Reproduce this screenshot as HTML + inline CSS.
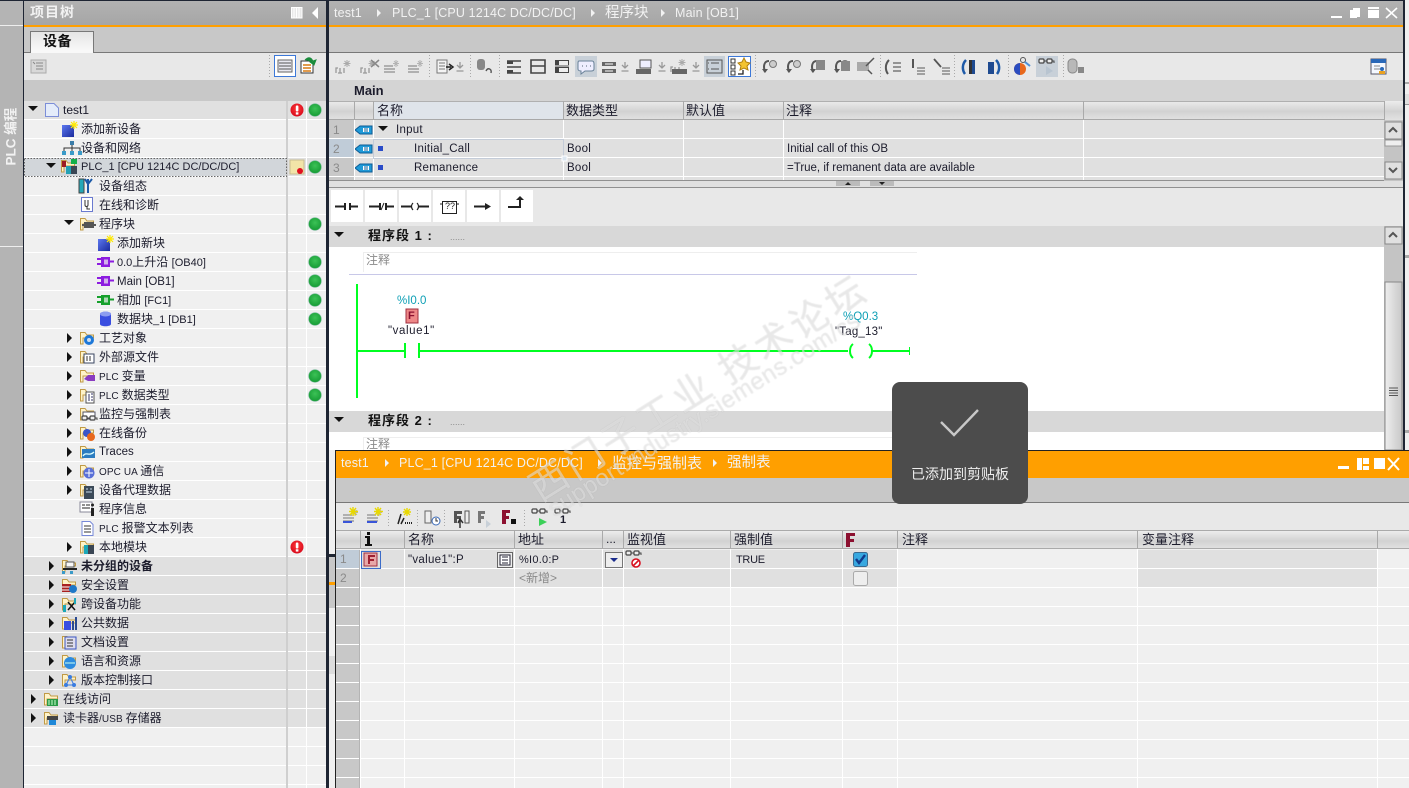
<!DOCTYPE html>
<html lang="zh"><head><meta charset="utf-8"><title>TIA</title>
<style>
html,body{margin:0;padding:0;width:1409px;height:788px;overflow:hidden;background:#f0f0f0}
body{position:relative;font:12px/19px "Liberation Sans","WenQuanYi Zen Hei","Noto Sans CJK SC",sans-serif;color:#1c1c2c}
#g{position:absolute;left:0;top:0}
.t{position:absolute;white-space:nowrap;height:19px;letter-spacing:0}
.w{color:#f2f2f2;font-size:12.5px;letter-spacing:.15px}
.h{color:#f2f2f2;font-size:14.5px;letter-spacing:0}
.th{font-size:13px}
.s{font-size:11px}
.p{font-size:10px;letter-spacing:.1px}
.b{font-weight:bold}
.c{color:#0d9fb5}
.y{color:#8a8a8a}
#wm{position:absolute;left:0;top:0;width:1409px;height:788px;pointer-events:none;overflow:hidden}
#wm div{position:absolute;white-space:nowrap;transform-origin:0 100%;transform:rotate(-32deg);color:rgba(255,255,255,.42);text-shadow:0 0 1px rgba(140,140,140,.35)}
#toast{position:absolute;left:892px;top:382px;width:136px;height:122px;background:#4c4c4c;border-radius:8px}
#toast div{position:absolute;left:0;right:0;top:83px;text-align:center;color:#eee;font-size:14px;line-height:19px}
#toast svg{position:absolute;left:0;top:0}
</style></head><body>
<svg id="g" width="1409" height="788" xmlns="http://www.w3.org/2000/svg">
<defs>
<linearGradient id="hd" x1="0" y1="0" x2="0" y2="1"><stop offset="0" stop-color="#b2b2b2"/><stop offset="1" stop-color="#a6a6a6"/></linearGradient>
<linearGradient id="th" x1="0" y1="0" x2="0" y2="1"><stop offset="0" stop-color="#ececec"/><stop offset=".55" stop-color="#d2d2d2"/><stop offset="1" stop-color="#e2e2e2"/></linearGradient>
<linearGradient id="tab" x1="0" y1="0" x2="0" y2="1"><stop offset="0" stop-color="#e4e4e4"/><stop offset="1" stop-color="#fafafa"/></linearGradient>
<linearGradient id="sb" x1="0" y1="0" x2="1" y2="0"><stop offset="0" stop-color="#eee"/><stop offset="1" stop-color="#c8c8c8"/></linearGradient>
<linearGradient id="bl" x1="0" y1="0" x2="1" y2="1"><stop offset="0" stop-color="#5c78f0"/><stop offset="1" stop-color="#1a2a9c"/></linearGradient>
<radialGradient id="gd" cx=".5" cy=".4" r=".6"><stop offset="0" stop-color="#3cc256"/><stop offset="1" stop-color="#159a34"/></radialGradient>
<radialGradient id="rd" cx=".5" cy=".4" r=".6"><stop offset="0" stop-color="#ff3a3a"/><stop offset="1" stop-color="#d80a1c"/></radialGradient>
<pattern id="rl" x="0" y="101" width="10" height="19" patternUnits="userSpaceOnUse"><rect y="18" width="10" height="1" fill="#fff"/></pattern>
<pattern id="rb" x="0" y="550" width="10" height="19" patternUnits="userSpaceOnUse"><rect y="18" width="10" height="1" fill="#fff"/></pattern>
<symbol id="dot" viewBox="0 0 14 14" width="14" height="14"><circle cx="7" cy="7" r="6.5" fill="url(#gd)" stroke="#bcd" stroke-opacity=".4"/></symbol>
<symbol id="err" viewBox="0 0 14 14" width="14" height="14"><circle cx="7" cy="7" r="6.5" fill="url(#rd)"/><rect x="5.8" y="2.5" width="2.6" height="6" rx="1" fill="#fff"/><rect x="5.8" y="9.3" width="2.6" height="2.3" fill="#fff"/></symbol>
<symbol id="fd" viewBox="0 0 18 18" width="18" height="18"><path d="M1.5 14V2.5H6L8 5H14.5V8H4V14Z" fill="#fff3c8" stroke="#c09a45"/></symbol>
<symbol id="rt" viewBox="0 0 6 10" width="6" height="10"><path d="M0 0L5 5L0 10Z" fill="#111"/></symbol>
<symbol id="dn" viewBox="0 0 10 6" width="10" height="6"><path d="M0 0H10L5 5Z" fill="#111"/></symbol>
<symbol id="new" viewBox="0 0 18 18" width="18" height="18"><rect x="1" y="4" width="12" height="12" fill="url(#bl)"/><path d="M13 0V8M9 4H17M10 1L16 7M16 1L10 7" stroke="#ffe900" stroke-width="1.2"/></symbol>
<symbol id="ob" viewBox="0 0 18 12" width="18" height="12"><path d="M0 3H4M0 8H4M13 5.5H17" stroke="currentColor" stroke-width="2"/><rect x="4" y="1" width="9" height="10" fill="currentColor"/><rect x="7" y="3.5" width="4" height="5" fill="#f0f0f0" fill-opacity=".7"/></symbol>
<symbol id="gl" viewBox="0 0 18 12" width="18" height="12"><rect x="1" y="2" width="5" height="4" rx="1" fill="#eee" stroke="#444" stroke-width="1.2"/><rect x="9" y="2" width="5" height="4" rx="1" fill="#eee" stroke="#444" stroke-width="1.2"/><path d="M6 4H9M14 4H16V6" fill="none" stroke="#444"/></symbol>
<symbol id="nw" viewBox="0 0 18 16" width="18" height="16"><path d="M1 14V9H3M5 14V9M3 14H7M9 14V9" fill="none" stroke="#999" stroke-width="1.3"/><path d="M12 1V8M8.5 4.500H15.500M9.500 2L14.500 7M14.500 2L9.500 7" stroke="#aaa"/></symbol>
<symbol id="stk" viewBox="0 0 18 16" width="18" height="16"><path d="M1 7H10M1 10H12M1 13H12" stroke="#b0b0b0" stroke-width="2"/><path d="M13 1V8M10 4.500H16M11 2L15 7M15 2L11 7" stroke="#b4b4b4"/></symbol>
<symbol id="ar" viewBox="0 0 8 12" width="8" height="12"><path d="M4 1V6M1 4L4 7L7 4M0.500 10H7.500" fill="none" stroke="#999" stroke-width="1.300"/></symbol>
<symbol id="ud" viewBox="0 0 14 14" width="14" height="14"><path d="M3 9L7 5L11 9" fill="none" stroke="#555" stroke-width="2"/></symbol>
<symbol id="dd" viewBox="0 0 14 14" width="14" height="14"><path d="M3 5L7 9L11 5" fill="none" stroke="#555" stroke-width="2"/></symbol>
<symbol id="tag" viewBox="0 0 18 10" width="18" height="10"><path d="M0 5L5 1H17V9H5Z" fill="#1f9ad8" stroke="#0c5c96"/><rect x="8" y="3" width="6" height="4" fill="#fff"/><path d="M10 3V7M12 3V7" stroke="#0c5c96"/></symbol>
<symbol id="call" viewBox="0 0 18 16" width="18" height="16"><path d="M9 2C4 2 3 7 5 13" fill="none" stroke="#555" stroke-width="2"/><path d="M2 10L5 14L8 10Z" fill="#555"/><circle cx="13" cy="5" r="3.500" fill="#ccc" stroke="#777"/></symbol>
</defs>

<!-- base strips -->
<rect width="1409" height="788" fill="#f0f0f0"/>
<rect x="0" y="0" width="23" height="788" fill="#b4b4b4"/>
<rect x="0" y="25" width="23" height="1" fill="#eee"/><rect x="0" y="246" width="23" height="1" fill="#eee"/>
<rect x="23" y="0" width="1" height="788" fill="#1e2533"/>
<rect x="0" y="0" width="1409" height="1" fill="#1e2533"/>
<rect x="326" y="0" width="3" height="788" fill="#1e2533"/>
<rect x="1403" y="0" width="2" height="450" fill="#1e2533"/>
<rect x="1405" y="0" width="4" height="450" fill="#f0f0f0"/>
<rect x="1405" y="82" width="4" height="2" fill="#aaa"/><rect x="1405" y="94" width="4" height="10" fill="#e0e0e0"/><rect x="1405" y="104" width="4" height="1" fill="#999"/>
<rect x="1405" y="255" width="4" height="3" fill="#aaa"/><rect x="1405" y="430" width="4" height="3" fill="#aaa"/>

<!-- project tree -->
<rect x="24" y="1" width="302" height="24" fill="url(#hd)"/>
<rect x="24" y="25" width="302" height="2" fill="#ff9f00"/>
<rect x="24" y="27" width="302" height="26" fill="#c8c8c8"/>
<rect x="24" y="52" width="302" height="1" fill="#787878"/>
<path d="M30.5 52.5V31.5H93.5V52.5" fill="url(#tab)" stroke="#787878"/>
<rect x="31" y="51" width="62" height="2" fill="#f8f8f8"/>
<rect x="24" y="53" width="302" height="27" fill="#e8e8e8"/>
<rect x="24" y="80" width="302" height="21" fill="#c8c8c8"/>
<rect x="24" y="101" width="302" height="687" fill="#f0f0f0"/>
<rect x="24" y="101" width="302" height="19" fill="#e0e0e0"/>
<rect x="24" y="557" width="302" height="171" fill="#e0e0e0"/>
<rect x="24" y="158" width="262" height="19" fill="#d2d6da"/>
<rect x="287" y="158" width="39" height="19" fill="#e0e0e0"/>
<rect x="24" y="101" width="302" height="687" fill="url(#rl)"/>
<rect x="286" y="101" width="2" height="687" fill="#cfcfcf"/>
<rect x="306" y="101" width="1" height="687" fill="#fff"/>
<rect x="24.5" y="158.5" width="262" height="18" fill="none" stroke="#666" stroke-dasharray="1.5 1.5"/>
<!-- tree toolbar icons -->
<rect x="31" y="60" width="15" height="13" fill="#d8d8d8" stroke="#aaa"/><path d="M36 63h7M36 66h7M36 69h7M33 62l2 2" stroke="#888"/>
<path d="M269.5 55V79" stroke="#aaa" stroke-dasharray="1 2"/>
<rect x="274.5" y="55.5" width="21" height="21" fill="#fff" stroke="#3c78d8"/>
<rect x="278" y="60" width="14" height="12" fill="#e8e8f0" stroke="#666"/><path d="M279 63H291M279 66H291M279 69H291" stroke="#555"/>
<rect x="301" y="61" width="12" height="12" fill="#fff" stroke="#333"/><path d="M303 65H311M303 68H311M303 71H311" stroke="#d87a10" stroke-width="1.4"/><path d="M305 60C309 56 312 58 313 62M310 62L314 65L316 60Z" fill="#1a8c3c" stroke="#1a8c3c"/>
<!-- arrows & tree icons -->
<use href="#dn" x="28" y="106"/><use href="#dn" x="46" y="163"/><use href="#dn" x="64" y="220"/>
<use href="#rt" x="67" y="333"/><use href="#rt" x="67" y="352"/><use href="#rt" x="67" y="371"/><use href="#rt" x="67" y="390"/><use href="#rt" x="67" y="409"/><use href="#rt" x="67" y="428"/><use href="#rt" x="67" y="447"/><use href="#rt" x="67" y="466"/><use href="#rt" x="67" y="485"/><use href="#rt" x="67" y="542"/>
<use href="#rt" x="49" y="561"/><use href="#rt" x="49" y="580"/><use href="#rt" x="49" y="599"/><use href="#rt" x="49" y="618"/><use href="#rt" x="49" y="637"/><use href="#rt" x="49" y="656"/><use href="#rt" x="49" y="675"/>
<use href="#rt" x="31" y="694"/><use href="#rt" x="31" y="713"/>
<!-- test1 doc -->
<path d="M45.5 103.5H54L58.500 108V116.500H45.500Z" fill="#e4ecfa" stroke="#7c8ed8"/>
<use href="#new" x="61" y="121"/>
<rect x="70" y="141" width="4" height="4" fill="#3a7ca8"/><path d="M72 145V148M64 151V148H80V151M72 148V151" fill="none" stroke="#333"/><rect x="62" y="151" width="4" height="4" fill="#3a9ac8"/><rect x="70" y="151" width="4" height="4" fill="#3a9ac8"/><rect x="78" y="151" width="4" height="4" fill="#3a9ac8"/>
<use href="#fd" x="60" y="158"/><rect x="71" y="159" width="6" height="5" fill="#12b04a"/><rect x="66" y="166" width="5" height="8" fill="#24a0b4"/><rect x="71" y="166" width="6" height="8" fill="#3a4654"/><rect x="62" y="161" width="4" height="6" fill="#9c1c24"/>
<rect x="79" y="179" width="5" height="14" fill="#24a8b8" stroke="#444"/><path d="M88 179V193M85 179L88 184L92 179" fill="none" stroke="#1c5aa8" stroke-width="2"/>
<rect x="81.500" y="197.500" width="11" height="14" fill="#fff" stroke="#6a7ad0"/><path d="M85 200V205C85 207 88 207 88 205V200M87 206V209H90" fill="none" stroke="#333"/>
<use href="#fd" x="79" y="216"/><rect x="84" y="222" width="10" height="6" fill="#555"/><path d="M82 225H96" stroke="#555" stroke-width="2"/>
<use href="#new" x="97" y="235"/>
<g color="#8c1ce0"><use href="#ob" x="97" y="256"/><use href="#ob" x="97" y="275"/></g>
<g color="#16a02c"><use href="#ob" x="97" y="294"/></g>
<path d="M100 314C100 311 111 311 111 314V324C111 327 100 327 100 324Z" fill="#3a4ee0"/><ellipse cx="105.500" cy="314" rx="5.500" ry="2.500" fill="#8c9cf0"/>
<!-- folders level 2 -->
<use href="#fd" x="79" y="330"/><circle cx="89" cy="340" r="5" fill="#1e78d8"/><circle cx="89" cy="340" r="2" fill="#cde"/>
<use href="#fd" x="79" y="349"/><rect x="84" y="354" width="10" height="9" fill="#fff" stroke="#3a4660"/><path d="M87 356V361M90 356V361" stroke="#333"/>
<use href="#fd" x="79" y="368"/><path d="M84 379L88 375H95V381H88Z" fill="#8a3cc0"/>
<use href="#fd" x="79" y="387"/><rect x="86" y="392" width="8" height="11" fill="#fff" stroke="#555"/><path d="M89 394V401M91 394H93M91 397H93M91 400H93" stroke="#336"/>
<use href="#fd" x="79" y="406"/><rect x="83" y="412" width="12" height="7" fill="#fff" stroke="#556"/><use href="#gl" x="81" y="414"/>
<use href="#fd" x="79" y="425"/><circle cx="87" cy="433" r="4" fill="#3a55c8"/><circle cx="91" cy="437" r="4" fill="#e8681c"/>
<use href="#fd" x="79" y="444"/><rect x="82" y="449" width="13" height="9" fill="#2c7cc0"/><path d="M83 456C86 451 89 457 94 452" fill="none" stroke="#dff" stroke-width="1.300"/>
<use href="#fd" x="79" y="463"/><circle cx="89" cy="473" r="5.500" fill="#5a70d8"/><path d="M85 473H93M89 469V477" stroke="#fff"/>
<use href="#fd" x="79" y="482"/><rect x="84" y="486" width="10" height="13" fill="#3c4a58"/><path d="M86 489H88M90 489H92M86 492H92" stroke="#cde"/>
<rect x="80" y="502" width="12" height="10" fill="#fff" stroke="#889"/><path d="M82 505H85M86 505H90M82 508H90" stroke="#222"/><rect x="91" y="508" width="3" height="8" fill="#222"/><circle cx="92.500" cy="505" r="1.500" fill="#222"/>
<path d="M82 521.500H90L93 524.500V535.500H82Z" fill="#fff" stroke="#7688d8"/><path d="M84 526H91M84 529H91M84 532H91" stroke="#333"/>
<use href="#fd" x="79" y="539"/><rect x="84" y="545" width="4" height="9" fill="#1ca8b8"/><rect x="88" y="545" width="6" height="9" fill="#3a4654"/>
<!-- folders level 1 -->
<use href="#fd" x="61" y="558"/><rect x="66" y="562" width="8" height="5" fill="#f8f8f8" stroke="#555"/><path d="M63 569H77" stroke="#222" stroke-width="2"/><rect x="62" y="571" width="3" height="3" fill="#3a9ac8"/><rect x="70" y="571" width="3" height="3" fill="#3a9ac8"/>
<use href="#fd" x="61" y="577"/><rect x="62" y="584" width="9" height="8" fill="#a82020"/><path d="M62 587H71M62 590H71" stroke="#fff"/><circle cx="73" cy="589" r="4" fill="#1e78c8"/>
<use href="#fd" x="61" y="596"/><path d="M68 602L75 610M75 602L68 610" stroke="#111" stroke-width="1.500"/><rect x="63" y="605" width="3" height="7" fill="#1ca8b8"/><rect x="74" y="598" width="2" height="6" fill="#1ca8b8"/>
<use href="#fd" x="61" y="615"/><rect x="64" y="621" width="7" height="9" fill="#3a4ee0"/><path d="M73 621V630M76 617V630" stroke="#2a4a90" stroke-width="2"/>
<use href="#fd" x="61" y="634"/><rect x="65" y="637" width="11" height="12" fill="#dde" stroke="#3a55c0"/><path d="M67 640H73M67 643H73M67 646H73" stroke="#333"/>
<use href="#fd" x="61" y="653"/><circle cx="70" cy="663" r="6" fill="#2c8ce0"/><path d="M65 663H75" stroke="#cfe" />
<use href="#fd" x="61" y="672"/><circle cx="70" cy="677" r="2" fill="#3a7ce0"/><circle cx="66" cy="685" r="2" fill="#3a7ce0"/><circle cx="74" cy="685" r="2" fill="#3a7ce0"/><path d="M70 677L66 685H74Z" fill="none" stroke="#3a7ce0"/>
<use href="#fd" x="43" y="691"/><rect x="47" y="699" width="11" height="7" fill="#2a9a48"/><path d="M49 700V705M52 700V705M55 700V705" stroke="#cfc"/>
<use href="#fd" x="43" y="710"/><rect x="47" y="716" width="11" height="4" fill="#444"/><rect x="49" y="720" width="7" height="5" fill="#1e88d8"/>
<!-- status -->
<use href="#err" x="290" y="103"/><use href="#dot" x="308" y="103"/>
<rect x="290" y="160" width="14" height="14" fill="#f2e4a8" stroke="#c8bc90"/><circle cx="300" cy="171" r="3" fill="#e01020"/>
<use href="#dot" x="308" y="160"/><use href="#dot" x="308" y="217"/><use href="#dot" x="308" y="255"/><use href="#dot" x="308" y="274"/><use href="#dot" x="308" y="293"/><use href="#dot" x="308" y="312"/><use href="#dot" x="308" y="369"/><use href="#dot" x="308" y="388"/><use href="#err" x="290" y="540"/>

<!-- main editor -->
<rect x="329" y="1" width="1074" height="24" fill="url(#hd)"/>
<rect x="329" y="25" width="1074" height="2" fill="#ff9f00"/>
<rect x="329" y="27" width="1074" height="26" fill="#c8c8c8"/>
<rect x="329" y="52" width="1074" height="1" fill="#787878"/>
<rect x="329" y="53" width="1074" height="27" fill="#e8e8e8"/>
<rect x="329" y="80" width="1074" height="21" fill="#d4d4d4"/>
<!-- header arrows -->
<path d="M377 9L381 13L377 17Z M591 9L595 13L591 17Z M661 9L665 13L661 17Z" fill="#f2f2f2"/>
<!-- win buttons -->
<rect x="1331" y="16" width="11" height="2" fill="#fff"/>
<rect x="1353" y="8" width="7" height="9" fill="#fff"/><rect x="1350" y="10" width="7" height="8" fill="#fff"/>
<rect x="1368" y="7" width="11" height="2" fill="#fff"/><rect x="1368" y="10" width="11" height="8" fill="#fff"/>
<path d="M1386 8L1397 18M1397 8L1386 18" stroke="#fff" stroke-width="1.600"/>
<!-- toolbar highlight -->
<rect x="575" y="56" width="22" height="21" fill="#c8d0d8"/>
<rect x="704" y="56" width="21" height="21" fill="#c8d0d8"/>
<rect x="728.500" y="56.500" width="22" height="20" fill="#fff" stroke="#3c78d8"/>
<rect x="1036" y="56" width="22" height="21" fill="#c8d0d8"/>
<g stroke="#aaa" stroke-dasharray="1 2"><path d="M429.500 55V78M470.500 55V78M499.500 55V78M755.500 55V78M880.500 55V78M954.500 55V78M1008.500 55V78M1063.500 55V78"/></g>
<use href="#nw" x="335" y="59"/><use href="#nw" x="360" y="59"/><path d="M371 60L379 67M379 60L371 67" stroke="#888" stroke-width="1.500"/>
<use href="#stk" x="383" y="59"/><use href="#stk" x="407" y="59"/>
<path d="M437 60H447V73H437ZM439 63H445M439 66H445M439 69H445" fill="#f4f4f4" stroke="#777"/><path d="M446 67H451M449 64L453 67L449 70" fill="none" stroke="#222" stroke-width="1.500"/><use href="#ar" x="456" y="61"/>
<rect x="477" y="59" width="8" height="11" rx="3" fill="#888"/><path d="M486 71C488 67 492 69 491 73" fill="none" stroke="#555" stroke-width="1.400"/>
<g fill="none" stroke="#444" stroke-width="1.600"><path d="M507 61H521M507 67H521M507 73H521"/><path d="M531 60H545V73H531ZM531 66H545"/></g><path d="M507 61h6v3h-6zM507 70h6v3h-6z" fill="#444"/>
<rect x="555" y="60" width="14" height="13" fill="#444"/><path d="M555 66H569" stroke="#fff"/><rect x="559" y="61" width="9" height="4" fill="#eee"/><rect x="559" y="68" width="9" height="4" fill="#eee"/>
<path d="M579 61H592C594 61 594 63 594 64V69C594 71 592 71 591 71H585L581 74V71C579 71 578 70 578 69V64C578 62 578 61 579 61Z" fill="#eef" stroke="#6a8298"/><path d="M582 66h1M586 66h1M590 66h1" stroke="#567"/>
<g fill="#666"><path d="M602 62h14v4h-14zM602 69h14v4h-14z"/></g><path d="M605 64H613M605 71H613" stroke="#fff"/><use href="#ar" x="621" y="61"/>
<path d="M640 60h11v8h-11z" fill="#eef" stroke="#555"/><rect x="636" y="69" width="15" height="5" fill="#666"/><use href="#ar" x="658" y="61"/>
<use href="#nw" x="670" y="58"/><rect x="672" y="69" width="15" height="5" fill="#666"/><use href="#ar" x="692" y="61"/>
<path d="M707 60H722V73H707ZM711 63H719M711 69H719M708 63h1M708 69h1" fill="none" stroke="#555"/>
<rect x="731" y="59" width="4" height="4" fill="#fff" stroke="#333"/><rect x="731" y="65" width="4" height="4" fill="#fff" stroke="#333"/><rect x="731" y="71" width="4" height="4" fill="#fff" stroke="#333"/><path d="M744 58L746 62L750 63L747 66L748 70L744 68L740 70L741 66L738 63L742 62Z" fill="#f4c430" stroke="#b08010"/><path d="M743 70V74H738" fill="none" stroke="#222" stroke-width="1.300"/>
<use href="#call" x="760" y="59"/><use href="#call" x="784" y="59"/>
<use href="#call" x="808" y="59"/><rect x="816" y="60" width="9" height="10" fill="#888"/><use href="#call" x="832" y="59"/><rect x="841" y="61" width="9" height="10" fill="#888"/>
<path d="M857 62H869V71H857Z" fill="#aaa"/><path d="M866 66L874 58M868 70L872 74" stroke="#555" stroke-width="1.500"/>
<path d="M889 60C885 64 885 70 888 74" fill="none" stroke="#555" stroke-width="2"/><path d="M893 63H901M893 67H901M893 71H901" stroke="#888" stroke-width="1.700"/>
<path d="M913 59V68" stroke="#555" stroke-width="2"/><path d="M917 68H925M917 71H925M917 74H925" stroke="#888" stroke-width="1.500"/>
<path d="M934 59L941 67" stroke="#555" stroke-width="1.800"/><path d="M942 68H950M942 71H950M942 74H950" stroke="#888" stroke-width="1.500"/>
<path d="M966 60C962 64 962 70 965 74" fill="none" stroke="#1e5aa8" stroke-width="2.500"/><rect x="969" y="60" width="6" height="14" fill="#1e4a90"/><rect x="969" y="60" width="3" height="14" fill="#333"/>
<path d="M996 60C1000 64 1000 70 997 74" fill="none" stroke="#1e5aa8" stroke-width="2.500"/><rect x="988" y="62" width="6" height="12" fill="#1e4a90"/>
<circle cx="1020" cy="69" r="6" fill="#e8681c"/><path d="M1020 63A6 6 0 0 0 1020 75Z" fill="#2a4cc0"/><circle cx="1023" cy="60" r="2.500" fill="none" stroke="#555"/><path d="M1025 62L1030 66" stroke="#4a90d8" stroke-width="2"/>
<use href="#gl" x="1038" y="57"/><path d="M1046 66L1053 71L1046 75Z" fill="#b8c4d0"/>
<rect x="1068" y="59" width="9" height="14" rx="4" fill="#b8b8b8" stroke="#888"/><rect x="1078" y="67" width="6" height="6" fill="#888"/>
<rect x="1371" y="59" width="15" height="15" fill="#f4f8ff" stroke="#556"/><rect x="1371" y="59" width="15" height="4" fill="#2a68b8"/><path d="M1374 66H1380M1374 69H1380" stroke="#888"/><circle cx="1382" cy="69" r="2" fill="#2a68b8"/><rect x="1379" y="71" width="6" height="3" fill="#e8a020"/>

<!-- interface table -->
<rect x="329" y="101" width="1055" height="19" fill="url(#th)"/>
<rect x="373" y="101" width="190" height="19" fill="#dfe4ea"/>
<rect x="329" y="101" width="1074" height="1" fill="#b0b0b0"/><rect x="329" y="119" width="1074" height="1" fill="#a8a8a8"/>
<rect x="1384" y="101" width="19" height="19" fill="url(#th)"/>
<path d="M354.500 101V120M373.500 101V120M563.500 101V120M683.500 101V120M783.500 101V120M1083.500 101V120M1384.500 101V120" stroke="#aaa"/>
<rect x="329" y="120" width="1055" height="60" fill="#e0e0e0"/>
<rect x="329" y="120" width="25" height="60" fill="#c8c8c8"/>
<rect x="329" y="139" width="25" height="19" fill="#c0ccd8"/>
<rect x="373" y="158" width="190" height="1" fill="#fff"/>
<path d="M329 138.500H1384M329 157.500H1384M329 176.500H1384" stroke="#fff"/>
<path d="M354.500 120V180M373.500 120V180M563.500 120V180M683.500 120V180M783.500 120V180M1083.500 120V180" stroke="#fff"/>
<rect x="373.500" y="139.500" width="190" height="19" fill="none" stroke="#c4ccd8"/><rect x="562" y="156" width="5" height="5" fill="#dbe6f0" stroke="#fff"/>
<use href="#tag" x="355" y="125"/><use href="#tag" x="355" y="144"/><use href="#tag" x="355" y="163"/>
<use href="#dn" x="378" y="126"/>
<rect x="378" y="146" width="5" height="5" fill="#2a4cc8"/><rect x="378" y="165" width="5" height="5" fill="#2a4cc8"/>
<rect x="329" y="180" width="1074" height="1" fill="#909090"/>
<rect x="329" y="181" width="1074" height="6" fill="#e0e0e0"/>
<rect x="329" y="187" width="1074" height="1" fill="#909090"/>
<rect x="836" y="181" width="24" height="5" fill="#bbb"/><rect x="870" y="181" width="24" height="5" fill="#bbb"/><path d="M845 185L848 182L851 185Z M879 182L882 185L885 182Z" fill="#222"/>
<!-- scroll top -->
<rect x="1384" y="120" width="19" height="61" fill="#c4c4c4"/>
<rect x="1385" y="122" width="17" height="17" fill="#e0e0e0" stroke="#888"/><use href="#ud" x="1386" y="123"/>
<rect x="1385" y="140" width="17" height="6" fill="#eee" stroke="#999"/>
<rect x="1385" y="162" width="17" height="17" fill="#e0e0e0" stroke="#888"/><use href="#dd" x="1386" y="163"/>
<!-- LAD toolbar -->
<rect x="329" y="188" width="1074" height="38" fill="#e8e8e8"/>
<g fill="#fff"><rect x="331" y="190" width="32" height="32"/><rect x="365" y="190" width="32" height="32"/><rect x="399" y="190" width="32" height="32"/><rect x="433" y="190" width="32" height="32"/><rect x="467" y="190" width="32" height="32"/><rect x="501" y="190" width="32" height="32"/></g>
<g stroke="#222" fill="none" stroke-width="2">
<path d="M335 206.500H345M345 203V210M350 203V210M350 206.500H358"/>
<path d="M369 206.500H379M380 203V210M386 203V210M386 206.500H394"/><path d="M381 210L384 203" stroke-width="1"/>
<path d="M401 206.500H411M419 206.500H429"/><path d="M413 203C411 205 411 208 413 210M417 203C419 205 419 208 417 210" stroke-width="1.200"/>
<path d="M474 206.500H486"/><path d="M508 207H520V199"/>
</g>
<rect x="442.500" y="201.500" width="14" height="12" fill="#fff" stroke="#222"/><path d="M440 204H442M457 204H459" stroke="#222"/>
<path d="M485 203L491 206.500L485 210Z M516 200L520 196L524 200Z" fill="#222"/>
<!-- networks -->
<rect x="329" y="226" width="1055" height="224" fill="#fff"/>
<rect x="329" y="226" width="1055" height="21" fill="#d8d8d8"/>
<rect x="329" y="411" width="1055" height="21" fill="#d8d8d8"/>
<use href="#dn" x="334" y="232"/><use href="#dn" x="334" y="417"/>
<path d="M363.500 252V272M363 252.500H917" stroke="#eee" fill="none"/><path d="M363.500 437V450M363 437.500H917" stroke="#eee" fill="none"/>
<rect x="349" y="274" width="568" height="1" fill="#c8c8e8"/>
<g stroke="#00ff21" stroke-width="2" fill="none">
<path d="M357 284V398"/>
<path d="M357 351H404M405 343V358M419 343V358M419 351H848M872 351H909"/>
<path d="M853 344C849 347 849 355 853 358M869 344C873 347 873 355 869 358"/>
<path d="M909.500 347V355" stroke-width="1"/>
</g>
<rect x="406" y="309" width="12" height="14" fill="#e88" stroke="#a03040"/>
<rect x="1384" y="226" width="19" height="224" fill="#c4c4c4"/>
<rect x="1385" y="227" width="17" height="17" fill="#e0e0e0" stroke="#888"/><use href="#ud" x="1386" y="228"/>
<rect x="1385" y="282" width="17" height="168" fill="url(#sb)" stroke="#888"/>
<path d="M1389 388H1398M1389 390.500H1398M1389 393H1398M1389 395.500H1398" stroke="#555"/>

<!-- bottom panel -->
<rect x="329" y="450" width="6" height="338" fill="#f0f0f0"/>
<rect x="329" y="556" width="6" height="52" fill="#c8c8c8"/><rect x="329" y="582" width="6" height="3" fill="#ff9f00"/><rect x="329" y="554" width="6" height="3" fill="#1e2533"/>
<rect x="329" y="656" width="6" height="18" fill="#dcdcdc"/>
<rect x="335" y="450" width="1" height="338" fill="#222"/>
<rect x="335" y="450" width="1074" height="1" fill="#222"/>
<rect x="336" y="451" width="1073" height="27" fill="#ff9f00"/>
<rect x="336" y="478" width="1073" height="24" fill="#c8c8c8"/>
<rect x="336" y="502" width="1073" height="1" fill="#787878"/>
<rect x="336" y="503" width="1073" height="27" fill="#e8e8e8"/>
<rect x="336" y="530" width="1073" height="1" fill="#aaa"/>
<rect x="336" y="531" width="1073" height="18" fill="url(#th)"/>
<rect x="336" y="548" width="1073" height="1" fill="#aaa"/>
<rect x="336" y="549" width="1073" height="239" fill="#f0f0f0"/>
<rect x="336" y="550" width="1042" height="38" fill="#e0e0e0"/>
<rect x="898" y="550" width="240" height="38" fill="#f0f0f0"/>
<rect x="336" y="550" width="24" height="238" fill="#c8c8c8"/>
<rect x="336" y="550" width="24" height="19" fill="#c0ccd8"/>
<rect x="336" y="550" width="1073" height="238" fill="url(#rb)"/>
<path d="M360.500 531V788M404.500 531V788M514.500 531V788M602.500 531V788M623.500 531V788M730.500 531V788M842.500 531V788M897.500 531V788M1137.500 531V788M1377.500 531V788" stroke="#fff"/>
<path d="M360.500 531V549M404.500 531V549M514.500 531V549M602.500 531V549M623.500 531V549M730.500 531V549M842.500 531V549M897.500 531V549M1137.500 531V549M1377.500 531V549" stroke="#aaa"/>
<rect x="359" y="550" width="1" height="238" fill="#b4b4b4"/>
<!-- bottom header arrows -->
<path d="M385 459L389 463L385 467Z M598 459L602 463L598 467Z M713 459L717 463L713 467Z" fill="#f2f2f2"/>
<!-- bottom header buttons -->
<rect x="1338" y="466" width="11" height="3" fill="#fff"/>
<rect x="1357" y="458" width="5" height="12" fill="#fff"/><rect x="1363" y="458" width="6" height="6" fill="#fff"/><rect x="1363" y="466" width="6" height="4" fill="#fff"/>
<rect x="1374" y="458" width="11" height="11" fill="#fff"/>
<path d="M1388 458L1399 470M1399 458L1388 470" stroke="#fff" stroke-width="2"/>
<!-- bottom toolbar -->
<use href="#stk" x="342" y="508"/><use href="#stk" x="366" y="508"/>
<path d="M353 507V516M349 511.500H358M350 508L356 515M356 508L350 515M378 507V516M374 511.500H383M375 508L381 515M381 508L375 515" stroke="#e8d800" stroke-width="1.400"/>
<path d="M367 522H377" stroke="#3a55d8" stroke-width="2"/><path d="M343 522H352" stroke="#3a55d8" stroke-width="2"/>
<path d="M388.500 510V528M417.500 510V528M444.500 510V528M524.500 510V528" stroke="#aaa" stroke-dasharray="1 2"/>
<path d="M398 524L401 514M401 524L404 518" stroke="#222" stroke-width="1.500"/><path d="M407 508V516M403 512H411M404 509L410 515M410 509L404 515" stroke="#e8d800" stroke-width="1.400"/><path d="M405 523h8" stroke="#222" stroke-dasharray="1 1" stroke-width="2"/>
<rect x="425" y="511" width="6" height="12" fill="#eee" stroke="#666"/><circle cx="436" cy="521" r="4" fill="#fff" stroke="#3a6ab8"/><path d="M436 518V521H438" stroke="#333" fill="none"/>
<path d="M454 511H462V514H457V516H461V519H457V523H454Z" fill="#555"/><rect x="465" y="511" width="4" height="12" fill="#eee" stroke="#555"/><path d="M460 519V528M458 523L460 519L463 523" fill="none" stroke="#333" stroke-width="1.500"/>
<path d="M478 511H485V514H481V516H484V519H481V523H478Z" fill="#777"/><path d="M486 520L491 524L486 528Z" fill="#c8d0d8"/>
<path d="M502 510H510V513H506V516H509V519H506V524H502Z" fill="#8c1030"/><rect x="511" y="519" width="5" height="5" fill="#111"/>
<use href="#gl" x="531" y="507"/><path d="M539 518L547 522L539 526Z" fill="#3cd058"/><use href="#gl" x="554" y="507"/>
<!-- force table glyphs -->
<rect x="367" y="532" width="3" height="3" fill="#111"/><rect x="367" y="536" width="3" height="10" fill="#111"/><rect x="365" y="536" width="5" height="2" fill="#111"/><rect x="365" y="544" width="7" height="2" fill="#111"/>
<path d="M846 533H855V536H850V539H854V542H850V547H846Z" fill="#8c1030"/>
<rect x="361.500" y="551.500" width="19" height="17" fill="none" stroke="#3c6cc8"/>
<rect x="364" y="553" width="13" height="13" fill="#e8a8a8" stroke="#a03040"/>
<path d="M368 555H375V557H370V559H374V561H370V564H368Z" fill="#a02030"/>
<rect x="497.500" y="552.500" width="15" height="15" fill="#eee" stroke="#666"/><rect x="500" y="555" width="10" height="10" fill="#fff" stroke="#223"/><path d="M502 557H508M502 560H508M502 563H508" stroke="#223"/>
<rect x="605.500" y="552.500" width="17" height="15" fill="#eee" stroke="#777"/><path d="M610 558H618L614 562Z" fill="#1a2c8c"/>
<use href="#gl" x="625" y="549"/><circle cx="636" cy="563" r="4" fill="#fff" stroke="#d81020" stroke-width="1.600"/><path d="M633 566L639 560" stroke="#d81020" stroke-width="1.600"/>
<rect x="853.500" y="552.500" width="14" height="14" rx="2" fill="#38a8e0" stroke="#3a6a90"/><path d="M856 559L859 563L865 555" stroke="#103a8c" stroke-width="2.400" fill="none"/>
<rect x="853.500" y="571.500" width="14" height="14" rx="2" fill="#eee" stroke="#aaa"/>
</svg>

<!-- left strip -->
<div class="t b" style="left:-17px;top:128px;width:56px;text-align:center;color:#f2f2f2;font-size:13.5px;transform:rotate(-90deg)">PLC 编程</div>

<!-- tree text -->
<div class="t b" style="left:30px;top:3px;font-size:14px;letter-spacing:1px;color:#f2f2f2">项目树</div>
<div class="t b" style="left:43px;top:31px;font-size:14px;height:21px;line-height:21px;letter-spacing:.5px;color:#111">设备</div>
<svg style="position:absolute;left:290px;top:6px" width="34" height="14"><path d="M1.500 1.500H12V12H1.500ZM4 2V12M6.500 2V12M9 2V12" fill="#e8e8e8" stroke="#fff"/><path d="M22 7L28 1V13Z" fill="#fff"/></svg>
<div class="t" style="left:63px;top:101px">test1</div>
<div class="t" style="left:81px;top:120px">添加新设备</div>
<div class="t" style="left:81px;top:139px">设备和网络</div>
<div class="t" style="left:81px;top:158px;font-size:11px">PLC_1 [CPU 1214C DC/DC/DC]</div>
<div class="t" style="left:99px;top:177px">设备组态</div>
<div class="t" style="left:99px;top:196px">在线和诊断</div>
<div class="t" style="left:99px;top:215px">程序块</div>
<div class="t" style="left:117px;top:234px">添加新块</div>
<div class="t" style="left:117px;top:253px"><span class="s">0.0</span>上升沿 <span class="s">[OB40]</span></div>
<div class="t" style="left:117px;top:272px"><span style="font-size:11.500px">Main [OB1]</span></div>
<div class="t" style="left:117px;top:291px">相加 <span class="s">[FC1]</span></div>
<div class="t" style="left:117px;top:310px">数据块<span class="s">_1 [DB1]</span></div>
<div class="t" style="left:99px;top:329px">工艺对象</div>
<div class="t" style="left:99px;top:348px">外部源文件</div>
<div class="t" style="left:99px;top:367px"><span class="p">PLC </span>变量</div>
<div class="t" style="left:99px;top:386px"><span class="p">PLC </span>数据类型</div>
<div class="t" style="left:99px;top:405px">监控与强制表</div>
<div class="t" style="left:99px;top:424px">在线备份</div>
<div class="t" style="left:99px;top:443px;font-size:11.500px">Traces</div>
<div class="t" style="left:99px;top:462px"><span class="p">OPC UA </span>通信</div>
<div class="t" style="left:99px;top:481px">设备代理数据</div>
<div class="t" style="left:99px;top:500px">程序信息</div>
<div class="t" style="left:99px;top:519px"><span class="p">PLC </span>报警文本列表</div>
<div class="t" style="left:99px;top:538px">本地模块</div>
<div class="t b" style="left:81px;top:557px">未分组的设备</div>
<div class="t" style="left:81px;top:576px">安全设置</div>
<div class="t" style="left:81px;top:595px">跨设备功能</div>
<div class="t" style="left:81px;top:614px">公共数据</div>
<div class="t" style="left:81px;top:633px">文档设置</div>
<div class="t" style="left:81px;top:652px">语言和资源</div>
<div class="t" style="left:81px;top:671px">版本控制接口</div>
<div class="t" style="left:63px;top:690px">在线访问</div>
<div class="t" style="left:63px;top:709px">读卡器<span class="p">/USB </span>存储器</div>

<!-- main header text -->
<div class="t w" style="left:334px;top:4px">test1</div>
<div class="t w" style="left:392px;top:4px">PLC_1 [CPU 1214C DC/DC/DC]</div>
<div class="t h" style="left:605px;top:4px">程序块</div>
<div class="t w" style="left:675px;top:4px">Main [OB1]</div>
<div class="t b" style="left:354px;top:81px;font-size:13px;letter-spacing:0">Main</div>
<div class="t th" style="left:377px;top:101px">名称</div>
<div class="t th" style="left:566px;top:101px">数据类型</div>
<div class="t th" style="left:686px;top:101px">默认值</div>
<div class="t th" style="left:786px;top:101px">注释</div>
<div class="t y" style="left:333px;top:121px">1</div>
<div class="t y" style="left:333px;top:140px">2</div>
<div class="t y" style="left:333px;top:159px">3</div>
<div class="t" style="left:396px;top:121px;font-size:11.500px;letter-spacing:.25px">Input</div>
<div class="t" style="left:414px;top:140px;font-size:11.500px;letter-spacing:.25px">Initial_Call</div>
<div class="t" style="left:414px;top:159px;font-size:11.500px;letter-spacing:.25px">Remanence</div>
<div class="t" style="left:567px;top:140px;font-size:11.500px;letter-spacing:.25px">Bool</div>
<div class="t" style="left:567px;top:159px;font-size:11.500px;letter-spacing:.25px">Bool</div>
<div class="t" style="left:787px;top:140px;font-size:11.500px">Initial call of this OB</div>
<div class="t" style="left:787px;top:159px;font-size:11.500px">=True, if remanent data are available</div>
<div class="t" style="left:445px;top:197px;font-size:9px;letter-spacing:0;color:#222">??</div>
<div class="t b" style="left:368px;top:226px;font-size:13px;height:21px;line-height:19px;letter-spacing:1px;color:#111">程序段 1 :</div>
<div class="t y" style="left:450px;top:228px;font-size:9px;letter-spacing:0">......</div>
<div class="t y" style="left:366px;top:251px">注释</div>
<div class="t b" style="left:368px;top:411px;font-size:13px;letter-spacing:1px;color:#111">程序段 2 :</div>
<div class="t y" style="left:450px;top:413px;font-size:9px;letter-spacing:0">......</div>
<div class="t y" style="left:366px;top:435px">注释</div>
<div class="t c" style="left:397px;top:292px;font-size:11.500px">%I0.0</div>
<div class="t b" style="left:408px;top:307px;font-size:11px;letter-spacing:0;color:#8c1030">F</div>
<div class="t" style="left:388px;top:322px;font-size:11.500px;letter-spacing:.6px">"value1"</div>
<div class="t c" style="left:843px;top:308px;font-size:11.500px">%Q0.3</div>
<div class="t" style="left:835px;top:323px;font-size:11.500px;letter-spacing:.2px">"Tag_13"</div>

<!-- bottom text -->
<div class="t w" style="left:341px;top:454px">test1</div>
<div class="t w" style="left:399px;top:454px">PLC_1 [CPU 1214C DC/DC/DC]</div>
<div class="t h" style="left:612px;top:454px;font-size:15px">监控与强制表</div>
<div class="t h" style="left:727px;top:454px">强制表</div>
<div class="t th" style="left:408px;top:530px">名称</div>
<div class="t th" style="left:518px;top:530px">地址</div>
<div class="t" style="left:606px;top:530px">...</div>
<div class="t th" style="left:627px;top:530px">监视值</div>
<div class="t th" style="left:734px;top:530px">强制值</div>
<div class="t th" style="left:902px;top:530px">注释</div>
<div class="t th" style="left:1142px;top:530px">变量注释</div>
<div class="t y" style="left:340px;top:550px">1</div>
<div class="t y" style="left:340px;top:569px">2</div>
<div class="t" style="left:408px;top:551px;font-size:11.500px;letter-spacing:.3px">"value1":P</div>
<div class="t" style="left:519px;top:551px;font-size:11px;letter-spacing:.25px">%I0.0:P</div>
<div class="t y" style="left:519px;top:569px">&lt;新增&gt;</div>
<div class="t" style="left:736px;top:551px;font-size:11px;letter-spacing:-.3px">TRUE</div>
<div class="t b" style="left:560px;top:511px;font-size:11px">1</div>

<!-- watermark -->
<div id="wm">
<div style="left:546px;top:457px;font:38px 'Noto Sans CJK SC',sans-serif;letter-spacing:4px">西门子工业 技术论坛</div>
<div style="left:558px;top:495px;font:24px 'Liberation Sans',sans-serif;letter-spacing:.5px">support.industry.siemens.com/cs</div>
</div>

<div id="toast">
<svg width="136" height="122"><path d="M49 40L62 53L86 28" fill="none" stroke="#c8c8c8" stroke-width="2.400"/></svg>
<div>已添加到剪贴板</div>
</div>
</body></html>
